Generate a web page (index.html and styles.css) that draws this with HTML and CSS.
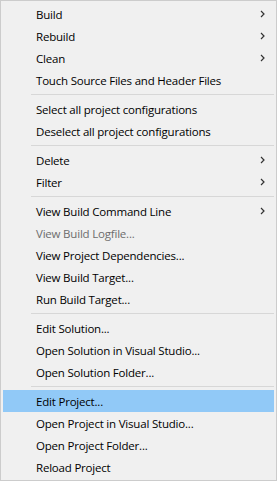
FILE: index.html
```html
<!DOCTYPE html>
<html lang="en">
<head>
    <meta charset="UTF-8">
    <title>Project Menu</title>
    <link rel="stylesheet" href="styles.css">
</head>
<body>
    <div class="menu">
        <div class="item"><span class="label">Build</span><svg class="chev" width="5" height="8" viewBox="0 0 5 8"><path d="M1 1 L4 4 L1 7" /></svg></div>
        <div class="item"><span class="label">Rebuild</span><svg class="chev" width="5" height="8" viewBox="0 0 5 8"><path d="M1 1 L4 4 L1 7" /></svg></div>
        <div class="item"><span class="label">Clean</span><svg class="chev" width="5" height="8" viewBox="0 0 5 8"><path d="M1 1 L4 4 L1 7" /></svg></div>
        <div class="item"><span class="label">Touch Source Files and Header Files</span></div>
        <div class="sep"></div>
        <div class="item"><span class="label">Select all project configurations</span></div>
        <div class="item"><span class="label">Deselect all project configurations</span></div>
        <div class="sep"></div>
        <div class="item"><span class="label">Delete</span><svg class="chev" width="5" height="8" viewBox="0 0 5 8"><path d="M1 1 L4 4 L1 7" /></svg></div>
        <div class="item"><span class="label">Filter</span><svg class="chev" width="5" height="8" viewBox="0 0 5 8"><path d="M1 1 L4 4 L1 7" /></svg></div>
        <div class="sep"></div>
        <div class="item"><span class="label">View Build Command Line</span><svg class="chev" width="5" height="8" viewBox="0 0 5 8"><path d="M1 1 L4 4 L1 7" /></svg></div>
        <div class="item disabled"><span class="label">View Build Logfile...</span></div>
        <div class="item"><span class="label">View Project Dependencies...</span></div>
        <div class="item"><span class="label">View Build Target...</span></div>
        <div class="item"><span class="label">Run Build Target...</span></div>
        <div class="sep"></div>
        <div class="item"><span class="label">Edit Solution...</span></div>
        <div class="item"><span class="label">Open Solution in Visual Studio...</span></div>
        <div class="item"><span class="label">Open Solution Folder...</span></div>
        <div class="sep"></div>
        <div class="item active"><span class="label">Edit Project...</span></div>
        <div class="item"><span class="label">Open Project in Visual Studio...</span></div>
        <div class="item"><span class="label">Open Project Folder...</span></div>
        <div class="item"><span class="label">Reload Project</span></div>
    </div>
</body>
</html>
```

FILE: styles.css
```css
body {
    margin: 0;
    font-family: "Open Sans", "Noto Sans", Arial, sans-serif;
    font-size: 11.5px;
    letter-spacing: -0.2px;
    color: #000;
}
.menu {
    box-sizing: border-box;
    width: 277px;
    height: 481px;
    padding: 2px;
    border: 1px solid #cccccc;
    background-color: #f0f0f0;
}
.item {
    display: flex;
    align-items: center;
    height: 22px;
    padding: 0 9px 0 33px;
}
.item .label {
    flex: 1;
    white-space: nowrap;
}
.item.active {
    background-color: #91c9f7;
}
.item.disabled {
    color: #6d6d6d;
}
.chev path {
    fill: none;
    stroke: #333;
    stroke-width: 1.2;
}
.sep {
    display: flex;
    align-items: center;
    height: 7px;
    padding-left: 28px;
}
.sep::before {
    content: '';
    flex: 1;
    height: 1px;
    background-color: #d7d7d7;
}
```
